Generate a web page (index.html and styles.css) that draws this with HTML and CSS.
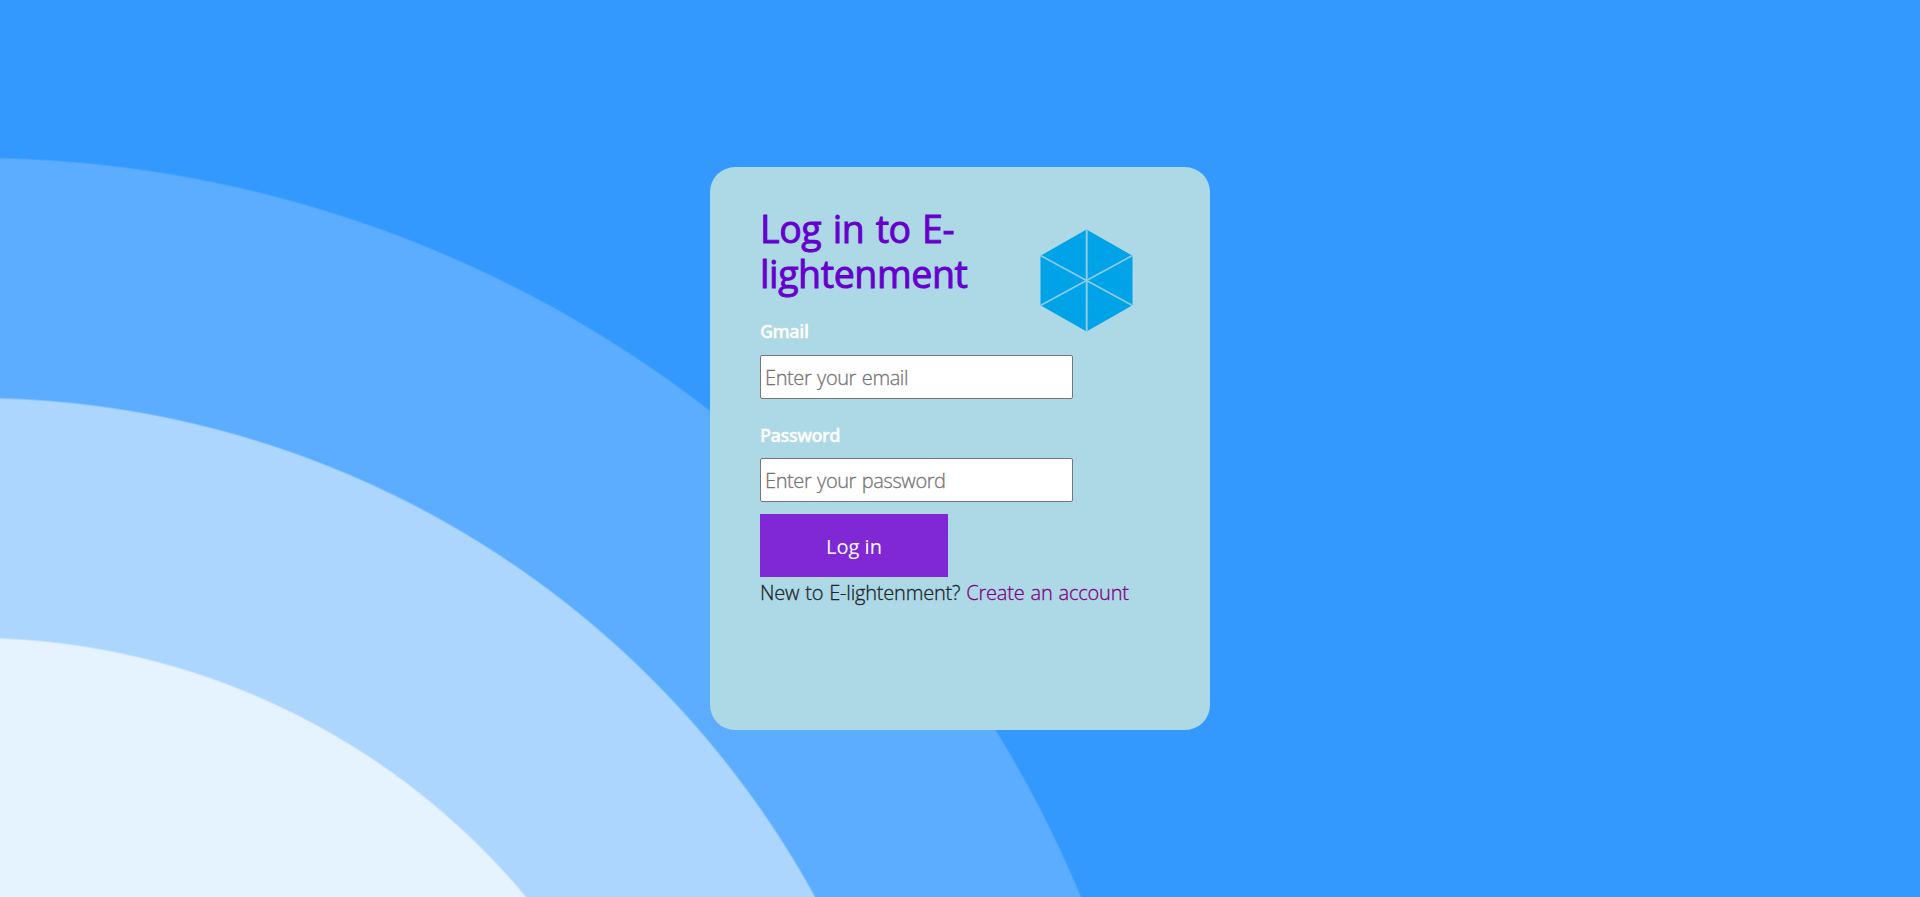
FILE: index.html
```html
<!DOCTYPE html>
<html lang="en">
<head>
  <meta charset="UTF-8">
  <title>Log in to E-lightenment</title>
  <link rel="stylesheet" href="styles.css">
</head>
<body>

  <div class="login-card">
    <div class="header">
      <h1>Log in to E-<br>lightenment</h1>
      <svg class="logo" width="93" height="103" viewBox="0 0 93 103">
        <polygon points="46.5,0.5 92.5,26.8 92.5,76.2 46.5,102.5 0.5,76.2 0.5,26.8" fill="#00a2e8"/>
        <path d="M46.7 0V103" stroke="#8accea" stroke-width="2"/>
        <path d="M0.5 26.5L92.5 76.5M92.5 26.5L0.5 76.5" stroke="#8accea" stroke-width="1.7"/>
      </svg>
    </div>

    <form>
      <label for="email">Gmail</label>
      <input type="email" id="email" placeholder="Enter your email">

      <label for="password">Password</label>
      <input type="password" id="password" placeholder="Enter your password">

      <button type="button" class="btn">Log in</button>
    </form>

    <p class="signup">New to E-lightenment? <a href="#">Create an account</a></p>
  </div>

</body>
</html>
```

FILE: styles.css
```css
* {
  box-sizing: border-box;
}
body {
  margin: 0;
  height: 897px;
  display: flex;
  align-items: center;
  justify-content: center;
  overflow: hidden;
  font-family: "Segoe UI", "Open Sans", "Noto Sans", sans-serif;
  font-size: 20px;
  color: #212529;
  background: radial-gradient(circle at -27px 1358px,
    #e5f2ff 719px, #add6ff 721px,
    #add6ff 959px, #5cadff 961px,
    #5cadff 1199px, #3399ff 1201px);
}
.login-card {
  width: 500px;
  height: 563px;
  padding: 39px 50px;
  border-radius: 25px;
  background-color: lightblue;
}
.header {
  display: flex;
  justify-content: space-between;
  height: 91px;
  padding-right: 27px;
}
h1 {
  margin: 0;
  font-size: 37.5px;
  font-weight: 500;
  line-height: 45px;
  letter-spacing: -0.4px;
  word-spacing: 2px;
  color: #6600cc;
  -webkit-text-stroke: 0.9px #6600cc;
}
.logo {
  flex: none;
  margin-top: 23px;
}
form {
  display: flex;
  flex-direction: column;
  align-items: flex-start;
}
label {
  height: 27px;
  margin-top: 21px;
  margin-bottom: 10px;
  font-size: 18px;
  font-weight: 600;
  line-height: 27px;
  letter-spacing: -0.45px;
  color: white;
  -webkit-text-stroke: 0.3px white;
}
input {
  width: 313px;
  height: 44px;
  padding: 1px 4px;
  border: 1px solid #767676;
  border-radius: 2px;
  font: inherit;
  font-weight: 300;
  letter-spacing: -0.4px;
  word-spacing: 1px;
  background-color: white;
}
input + label {
  margin-top: 23px;
  margin-bottom: 9px;
}
input::placeholder {
  color: #757575;
  -webkit-text-stroke: 0.3px #757575;
}
.btn {
  width: 188px;
  height: 63px;
  margin-top: 12px;
  padding: 1px 0 0;
  border: none;
  font: inherit;
  color: white;
  background-color: #8027d6;
  cursor: pointer;
}
.signup {
  margin: 0;
  font-weight: 300;
  line-height: 32px;
  letter-spacing: -0.2px;
  word-spacing: 1px;
  white-space: nowrap;
  -webkit-text-stroke: 0.3px;
}
.signup a {
  color: purple;
  text-decoration: none;
}
```
